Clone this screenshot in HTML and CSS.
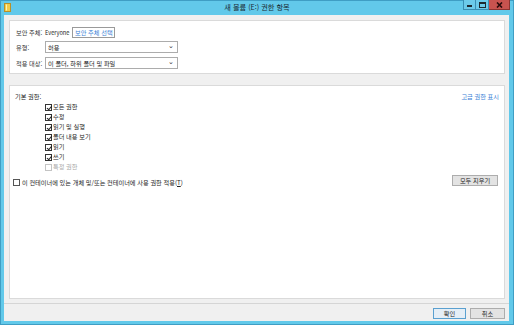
FILE: index.html
```html
<!DOCTYPE html>
<html lang="ko">
<head>
<meta charset="utf-8">
<link rel="stylesheet" href="styles.css">
</head>
<body>
<div class="window">
  <div class="titlebar">
    <svg class="appicon" width="7" height="9" viewBox="0 0 7 9"><rect x="0.5" y="0.5" width="6" height="8" fill="#f2cc4a" stroke="#b8902a"/><rect x="2" y="1.5" width="1" height="6" fill="#fff3b0"/></svg>
    <div class="title">새 볼륨 (E:) 권한 항목</div>
    <div class="wbtns">
      <div class="wbtn min"><span class="minbar"></span></div>
      <div class="wbtn max"><span class="maxbox"></span></div>
      <div class="wbtn close"><svg width="7" height="6" viewBox="0 0 7 6"><path d="M1 0.5 L6 5.5 M6 0.5 L1 5.5" stroke="#2a0a0a" stroke-width="1.6"/></svg></div>
    </div>
  </div>
  <div class="client">
    <div class="panel top">
      <div class="row r1">
        <span class="lbl">보안 주체:</span>
        <span class="who">Everyone</span>
        <span class="linkbtn">보안 주체 선택</span>
      </div>
      <div class="row">
        <span class="lbl">유형:</span>
        <div class="select"><span>허용</span><span class="chev">&#8964;</span></div>
      </div>
      <div class="row">
        <span class="lbl">적용 대상:</span>
        <div class="select"><span>이 폴더, 하위 폴더 및 파일</span><span class="chev">&#8964;</span></div>
      </div>
    </div>
    <div class="panel main">
      <div class="head">
        <span>기본 권한:</span>
        <span class="link">고급 권한 표시</span>
      </div>
      <ul class="perms">
        <li><span class="cb on"></span>모든 권한</li>
        <li><span class="cb on"></span>수정</li>
        <li><span class="cb on"></span>읽기 및 실행</li>
        <li><span class="cb on"></span>폴더 내용 보기</li>
        <li><span class="cb on"></span>읽기</li>
        <li><span class="cb on"></span>쓰기</li>
        <li class="dis"><span class="cb"></span>특정 권한</li>
      </ul>
      <div class="applyrow">
        <span class="apply"><span class="cb"></span>이 컨테이너에 있는 개체 및/또는 컨테이너에 사용 권한 적용(<u>T</u>)</span>
        <span class="btn clear">모두 지우기</span>
      </div>
    </div>
    <div class="footer">
      <span class="btn ok">확인</span>
      <span class="btn">취소</span>
    </div>
  </div>
</div>
</body>
</html>
```
FILE: styles.css
```css
html, body {
  margin: 0;
  padding: 0;
  background: #5fc7e9;
}
.window {
  width: 514px;
  height: 325px;
  box-sizing: border-box;
  background: #62c9ea;
  border: 1px solid #3f9ec4;
  display: flex;
  flex-direction: column;
  font-family: "Noto Sans CJK KR", "Noto Sans", sans-serif;
  font-size: 6.2px;
  color: #222;
  white-space: nowrap;
}
.titlebar {
  height: 14px;
  display: flex;
  align-items: flex-start;
  position: relative;
}
.appicon {
  margin: 2px 0 0 3px;
}
.title {
  position: absolute;
  left: 0;
  right: 0;
  top: 1px;
  text-align: center;
  font-size: 7.2px;
  line-height: 11px;
  color: #1a2a33;
}
.wbtns {
  margin-left: auto;
  margin-right: 3px;
  display: flex;
  margin-top: -1px;
}
.wbtn {
  height: 10px;
  box-sizing: border-box;
  border: 1px solid #3a8fb3;
  border-top: none;
  display: flex;
  align-items: center;
  justify-content: center;
  background: #6ccbea;
}
.wbtn.min { width: 13px; }
.wbtn.max { width: 13px; border-left: none; }
.wbtn.close { width: 21px; background: #c8534f; border-color: #8c3330; border-left: none; }
.minbar { width: 5px; height: 2px; background: #1e2a30; margin-top: 3px; }
.maxbox { width: 5px; height: 3px; border: 1px solid #1e2a30; border-top-width: 2px; }
.client {
  flex: 1;
  margin: 0 4px 3px 3px;
  background: #f0f0f0;
  display: flex;
  flex-direction: column;
  padding: 5px 4px 0 5px;
}
.panel {
  background: #fff;
  border: 1px solid #dadada;
  box-sizing: border-box;
}
.panel.top {
  height: 54px;
  padding: 6px 0 0 6px;
  display: flex;
  flex-direction: column;
  gap: 4px;
}
.row {
  display: flex;
  align-items: center;
  height: 12px;
}
.row.r1 { height: 11px; margin-bottom: -1px; }
.lbl {
  width: 29px;
  color: #333;
}
.who {
  width: 27px;
  font-size: 5.6px;
  color: #222;
}
.linkbtn {
  border: 1px solid #9a9a9a;
  height: 11px;
  box-sizing: border-box;
  padding: 0 1px 0 2px;
  line-height: 9px;
  color: #3a7fd6;
}
.select {
  width: 133px;
  height: 12px;
  box-sizing: border-box;
  border: 1px solid #acacac;
  display: flex;
  align-items: center;
  justify-content: space-between;
  padding: 0 3px 0 2px;
  color: #222;
}
.chev {
  font-size: 7px;
  line-height: 7px;
  margin-top: -3px;
  color: #333;
}
.panel.main {
  margin-top: 11px;
  height: 214px;
  padding: 6px 5px 0 5px;
}
.head {
  display: flex;
  justify-content: space-between;
  height: 9px;
  line-height: 9px;
}
.link { color: #3a7fd6; }
.perms {
  list-style: none;
  margin: 1px 0 0 30px;
  padding: 0;
}
.perms li {
  height: 10px;
  display: flex;
  align-items: center;
  line-height: 10px;
}
.perms li.dis { color: #a8a8a8; }
.cb {
  width: 7px;
  height: 7px;
  box-sizing: border-box;
  border: 1px solid #333;
  background: #fff;
  margin-right: 1px;
  display: inline-block;
  position: relative;
  flex: none;
}
.cb.on::after {
  content: "";
  position: absolute;
  left: 1.5px;
  top: 0px;
  width: 2px;
  height: 3.5px;
  border: solid #222;
  border-width: 0 1.2px 1.2px 0;
  transform: rotate(40deg);
}
.dis .cb { border-color: #c4c4c4; }
.applyrow {
  display: flex;
  justify-content: space-between;
  align-items: center;
  margin-top: 1px;
}
.apply {
  display: flex;
  align-items: center;
  margin-left: -2px;
  margin-top: 5px;
}
.apply .cb { margin-right: 2px; border-color: #555; }
.btn {
  width: 35px;
  height: 11px;
  box-sizing: border-box;
  border: 1px solid #adadad;
  background: #e3e3e3;
  display: flex;
  align-items: center;
  justify-content: center;
  color: #222;
}
.btn.clear { width: 46px; margin-right: 1px; }
.footer {
  flex: 1;
  border-top: 1px solid #d5d5d5;
  margin: 4px -4px 0 -5px;
  display: flex;
  justify-content: flex-end;
  align-items: flex-start;
  padding: 4px 4px 0 0;
  gap: 4px;
}
.btn.ok {
  width: 33px;
  border-color: #5aa0d0;
  background: #e5eef6;
}
```
